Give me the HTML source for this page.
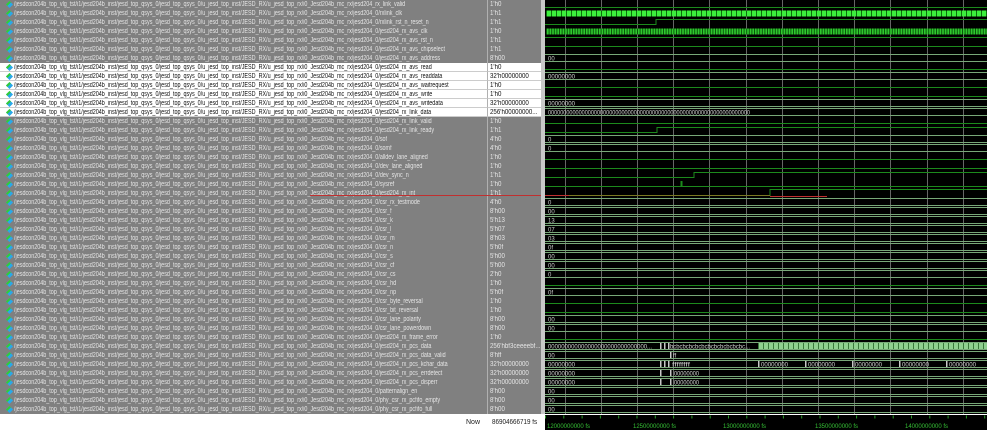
<!DOCTYPE html>
<html><head><meta charset="utf-8"><style>
*{margin:0;padding:0;box-sizing:border-box}
body{width:999px;height:446px;background:#fff;position:relative;overflow:hidden;font-family:"Liberation Sans",sans-serif}
#L{position:absolute;left:0;top:0;width:541px}
.r{height:9px;display:flex;font-size:7px;line-height:9px}
.n{width:488px;background:#808080;color:#e4e4e4;position:relative;overflow:hidden;white-space:nowrap;border-right:1px solid #b0b0b0}
.n span{position:absolute;left:14px;top:0;transform:scaleX(.775);transform-origin:0 0}
.n i{position:absolute;left:7px;top:2px;width:5px;height:5px;background:#2aa8e8;transform:rotate(45deg);border-left:2px solid #3c3}
.v{width:53px;background:#808080;color:#e4e4e4;padding-left:2px;white-space:nowrap;overflow:hidden;position:relative}
.v b{font-weight:normal;position:absolute;left:2px;transform:scaleX(.88);transform-origin:0 0}
.w .n,.w .v{background:#fff;color:#111;border-bottom:1px solid #ccc}
#sep{position:absolute;left:541px;top:0;width:4px;height:415px;background:#c8c8c8}
#red{position:absolute;left:310px;top:195px;width:231px;height:1px;background:#c03030}
#bot{position:absolute;left:0;top:414px;width:545px;height:17px;background:#fff;font-size:7px;color:#222}
</style></head><body>
<div id="L">
<div class="r"><div class="n"><i></i><span>/jesdcon204b_top_vlg_tst/i1/jesd204b_inst/jesd_top_qsys_0/jesd_top_qsys_0/u_jesd_top_inst/JESD_RX/u_jesd_top_rx/i0_Jesd204b_mc_rx/jesd204_rx_link_valid</span></div><div class="v"><b>1'h0</b></div></div>
<div class="r"><div class="n"><i></i><span>/jesdcon204b_top_vlg_tst/i1/jesd204b_inst/jesd_top_qsys_0/jesd_top_qsys_0/u_jesd_top_inst/JESD_RX/u_jesd_top_rx/i0_Jesd204b_mc_rx/jesd204_0/rxlink_clk</span></div><div class="v"><b>1'h1</b></div></div>
<div class="r"><div class="n"><i></i><span>/jesdcon204b_top_vlg_tst/i1/jesd204b_inst/jesd_top_qsys_0/jesd_top_qsys_0/u_jesd_top_inst/JESD_RX/u_jesd_top_rx/i0_Jesd204b_mc_rx/jesd204_0/rxlink_rst_n_reset_n</span></div><div class="v"><b>1'h1</b></div></div>
<div class="r"><div class="n"><i></i><span>/jesdcon204b_top_vlg_tst/i1/jesd204b_inst/jesd_top_qsys_0/jesd_top_qsys_0/u_jesd_top_inst/JESD_RX/u_jesd_top_rx/i0_Jesd204b_mc_rx/jesd204_0/jesd204_rx_avs_clk</span></div><div class="v"><b>1'h0</b></div></div>
<div class="r"><div class="n"><i></i><span>/jesdcon204b_top_vlg_tst/i1/jesd204b_inst/jesd_top_qsys_0/jesd_top_qsys_0/u_jesd_top_inst/JESD_RX/u_jesd_top_rx/i0_Jesd204b_mc_rx/jesd204_0/jesd204_rx_avs_rst_n</span></div><div class="v"><b>1'h1</b></div></div>
<div class="r"><div class="n"><i></i><span>/jesdcon204b_top_vlg_tst/i1/jesd204b_inst/jesd_top_qsys_0/jesd_top_qsys_0/u_jesd_top_inst/JESD_RX/u_jesd_top_rx/i0_Jesd204b_mc_rx/jesd204_0/jesd204_rx_avs_chipselect</span></div><div class="v"><b>1'h1</b></div></div>
<div class="r"><div class="n"><i></i><span>/jesdcon204b_top_vlg_tst/i1/jesd204b_inst/jesd_top_qsys_0/jesd_top_qsys_0/u_jesd_top_inst/JESD_RX/u_jesd_top_rx/i0_Jesd204b_mc_rx/jesd204_0/jesd204_rx_avs_address</span></div><div class="v"><b>8'h00</b></div></div>
<div class="r w"><div class="n"><i></i><span>/jesdcon204b_top_vlg_tst/i1/jesd204b_inst/jesd_top_qsys_0/jesd_top_qsys_0/u_jesd_top_inst/JESD_RX/u_jesd_top_rx/i0_Jesd204b_mc_rx/jesd204_0/jesd204_rx_avs_read</span></div><div class="v"><b>1'h0</b></div></div>
<div class="r w"><div class="n"><i></i><span>/jesdcon204b_top_vlg_tst/i1/jesd204b_inst/jesd_top_qsys_0/jesd_top_qsys_0/u_jesd_top_inst/JESD_RX/u_jesd_top_rx/i0_Jesd204b_mc_rx/jesd204_0/jesd204_rx_avs_readdata</span></div><div class="v"><b>32'h00000000</b></div></div>
<div class="r w"><div class="n"><i></i><span>/jesdcon204b_top_vlg_tst/i1/jesd204b_inst/jesd_top_qsys_0/jesd_top_qsys_0/u_jesd_top_inst/JESD_RX/u_jesd_top_rx/i0_Jesd204b_mc_rx/jesd204_0/jesd204_rx_avs_waitrequest</span></div><div class="v"><b>1'h0</b></div></div>
<div class="r w"><div class="n"><i></i><span>/jesdcon204b_top_vlg_tst/i1/jesd204b_inst/jesd_top_qsys_0/jesd_top_qsys_0/u_jesd_top_inst/JESD_RX/u_jesd_top_rx/i0_Jesd204b_mc_rx/jesd204_0/jesd204_rx_avs_write</span></div><div class="v"><b>1'h0</b></div></div>
<div class="r w"><div class="n"><i></i><span>/jesdcon204b_top_vlg_tst/i1/jesd204b_inst/jesd_top_qsys_0/jesd_top_qsys_0/u_jesd_top_inst/JESD_RX/u_jesd_top_rx/i0_Jesd204b_mc_rx/jesd204_0/jesd204_rx_avs_writedata</span></div><div class="v"><b>32'h00000000</b></div></div>
<div class="r w"><div class="n"><i></i><span>/jesdcon204b_top_vlg_tst/i1/jesd204b_inst/jesd_top_qsys_0/jesd_top_qsys_0/u_jesd_top_inst/JESD_RX/u_jesd_top_rx/i0_Jesd204b_mc_rx/jesd204_0/jesd204_rx_link_data</span></div><div class="v"><b>256'h00000000...</b></div></div>
<div class="r"><div class="n"><i></i><span>/jesdcon204b_top_vlg_tst/i1/jesd204b_inst/jesd_top_qsys_0/jesd_top_qsys_0/u_jesd_top_inst/JESD_RX/u_jesd_top_rx/i0_Jesd204b_mc_rx/jesd204_0/jesd204_rx_link_valid</span></div><div class="v"><b>1'h0</b></div></div>
<div class="r"><div class="n"><i></i><span>/jesdcon204b_top_vlg_tst/i1/jesd204b_inst/jesd_top_qsys_0/jesd_top_qsys_0/u_jesd_top_inst/JESD_RX/u_jesd_top_rx/i0_Jesd204b_mc_rx/jesd204_0/jesd204_rx_link_ready</span></div><div class="v"><b>1'h1</b></div></div>
<div class="r"><div class="n"><i></i><span>/jesdcon204b_top_vlg_tst/i1/jesd204b_inst/jesd_top_qsys_0/jesd_top_qsys_0/u_jesd_top_inst/JESD_RX/u_jesd_top_rx/i0_Jesd204b_mc_rx/jesd204_0/sof</span></div><div class="v"><b>4'h0</b></div></div>
<div class="r"><div class="n"><i></i><span>/jesdcon204b_top_vlg_tst/i1/jesd204b_inst/jesd_top_qsys_0/jesd_top_qsys_0/u_jesd_top_inst/JESD_RX/u_jesd_top_rx/i0_Jesd204b_mc_rx/jesd204_0/somf</span></div><div class="v"><b>4'h0</b></div></div>
<div class="r"><div class="n"><i></i><span>/jesdcon204b_top_vlg_tst/i1/jesd204b_inst/jesd_top_qsys_0/jesd_top_qsys_0/u_jesd_top_inst/JESD_RX/u_jesd_top_rx/i0_Jesd204b_mc_rx/jesd204_0/alldev_lane_aligned</span></div><div class="v"><b>1'h0</b></div></div>
<div class="r"><div class="n"><i></i><span>/jesdcon204b_top_vlg_tst/i1/jesd204b_inst/jesd_top_qsys_0/jesd_top_qsys_0/u_jesd_top_inst/JESD_RX/u_jesd_top_rx/i0_Jesd204b_mc_rx/jesd204_0/dev_lane_aligned</span></div><div class="v"><b>1'h0</b></div></div>
<div class="r"><div class="n"><i></i><span>/jesdcon204b_top_vlg_tst/i1/jesd204b_inst/jesd_top_qsys_0/jesd_top_qsys_0/u_jesd_top_inst/JESD_RX/u_jesd_top_rx/i0_Jesd204b_mc_rx/jesd204_0/dev_sync_n</span></div><div class="v"><b>1'h1</b></div></div>
<div class="r"><div class="n"><i></i><span>/jesdcon204b_top_vlg_tst/i1/jesd204b_inst/jesd_top_qsys_0/jesd_top_qsys_0/u_jesd_top_inst/JESD_RX/u_jesd_top_rx/i0_Jesd204b_mc_rx/jesd204_0/sysref</span></div><div class="v"><b>1'h0</b></div></div>
<div class="r"><div class="n"><i></i><span>/jesdcon204b_top_vlg_tst/i1/jesd204b_inst/jesd_top_qsys_0/jesd_top_qsys_0/u_jesd_top_inst/JESD_RX/u_jesd_top_rx/i0_Jesd204b_mc_rx/jesd204_0/jesd204_rx_int</span></div><div class="v"><b>1'h1</b></div></div>
<div class="r"><div class="n"><i></i><span>/jesdcon204b_top_vlg_tst/i1/jesd204b_inst/jesd_top_qsys_0/jesd_top_qsys_0/u_jesd_top_inst/JESD_RX/u_jesd_top_rx/i0_Jesd204b_mc_rx/jesd204_0/csr_rx_testmode</span></div><div class="v"><b>4'h0</b></div></div>
<div class="r"><div class="n"><i></i><span>/jesdcon204b_top_vlg_tst/i1/jesd204b_inst/jesd_top_qsys_0/jesd_top_qsys_0/u_jesd_top_inst/JESD_RX/u_jesd_top_rx/i0_Jesd204b_mc_rx/jesd204_0/csr_f</span></div><div class="v"><b>8'h00</b></div></div>
<div class="r"><div class="n"><i></i><span>/jesdcon204b_top_vlg_tst/i1/jesd204b_inst/jesd_top_qsys_0/jesd_top_qsys_0/u_jesd_top_inst/JESD_RX/u_jesd_top_rx/i0_Jesd204b_mc_rx/jesd204_0/csr_k</span></div><div class="v"><b>5'h13</b></div></div>
<div class="r"><div class="n"><i></i><span>/jesdcon204b_top_vlg_tst/i1/jesd204b_inst/jesd_top_qsys_0/jesd_top_qsys_0/u_jesd_top_inst/JESD_RX/u_jesd_top_rx/i0_Jesd204b_mc_rx/jesd204_0/csr_l</span></div><div class="v"><b>5'h07</b></div></div>
<div class="r"><div class="n"><i></i><span>/jesdcon204b_top_vlg_tst/i1/jesd204b_inst/jesd_top_qsys_0/jesd_top_qsys_0/u_jesd_top_inst/JESD_RX/u_jesd_top_rx/i0_Jesd204b_mc_rx/jesd204_0/csr_m</span></div><div class="v"><b>8'h03</b></div></div>
<div class="r"><div class="n"><i></i><span>/jesdcon204b_top_vlg_tst/i1/jesd204b_inst/jesd_top_qsys_0/jesd_top_qsys_0/u_jesd_top_inst/JESD_RX/u_jesd_top_rx/i0_Jesd204b_mc_rx/jesd204_0/csr_n</span></div><div class="v"><b>5'h0f</b></div></div>
<div class="r"><div class="n"><i></i><span>/jesdcon204b_top_vlg_tst/i1/jesd204b_inst/jesd_top_qsys_0/jesd_top_qsys_0/u_jesd_top_inst/JESD_RX/u_jesd_top_rx/i0_Jesd204b_mc_rx/jesd204_0/csr_s</span></div><div class="v"><b>5'h00</b></div></div>
<div class="r"><div class="n"><i></i><span>/jesdcon204b_top_vlg_tst/i1/jesd204b_inst/jesd_top_qsys_0/jesd_top_qsys_0/u_jesd_top_inst/JESD_RX/u_jesd_top_rx/i0_Jesd204b_mc_rx/jesd204_0/csr_cf</span></div><div class="v"><b>5'h00</b></div></div>
<div class="r"><div class="n"><i></i><span>/jesdcon204b_top_vlg_tst/i1/jesd204b_inst/jesd_top_qsys_0/jesd_top_qsys_0/u_jesd_top_inst/JESD_RX/u_jesd_top_rx/i0_Jesd204b_mc_rx/jesd204_0/csr_cs</span></div><div class="v"><b>2'h0</b></div></div>
<div class="r"><div class="n"><i></i><span>/jesdcon204b_top_vlg_tst/i1/jesd204b_inst/jesd_top_qsys_0/jesd_top_qsys_0/u_jesd_top_inst/JESD_RX/u_jesd_top_rx/i0_Jesd204b_mc_rx/jesd204_0/csr_hd</span></div><div class="v"><b>1'h0</b></div></div>
<div class="r"><div class="n"><i></i><span>/jesdcon204b_top_vlg_tst/i1/jesd204b_inst/jesd_top_qsys_0/jesd_top_qsys_0/u_jesd_top_inst/JESD_RX/u_jesd_top_rx/i0_Jesd204b_mc_rx/jesd204_0/csr_np</span></div><div class="v"><b>5'h0f</b></div></div>
<div class="r"><div class="n"><i></i><span>/jesdcon204b_top_vlg_tst/i1/jesd204b_inst/jesd_top_qsys_0/jesd_top_qsys_0/u_jesd_top_inst/JESD_RX/u_jesd_top_rx/i0_Jesd204b_mc_rx/jesd204_0/csr_byte_reversal</span></div><div class="v"><b>1'h0</b></div></div>
<div class="r"><div class="n"><i></i><span>/jesdcon204b_top_vlg_tst/i1/jesd204b_inst/jesd_top_qsys_0/jesd_top_qsys_0/u_jesd_top_inst/JESD_RX/u_jesd_top_rx/i0_Jesd204b_mc_rx/jesd204_0/csr_bit_reversal</span></div><div class="v"><b>1'h0</b></div></div>
<div class="r"><div class="n"><i></i><span>/jesdcon204b_top_vlg_tst/i1/jesd204b_inst/jesd_top_qsys_0/jesd_top_qsys_0/u_jesd_top_inst/JESD_RX/u_jesd_top_rx/i0_Jesd204b_mc_rx/jesd204_0/csr_lane_polarity</span></div><div class="v"><b>8'h00</b></div></div>
<div class="r"><div class="n"><i></i><span>/jesdcon204b_top_vlg_tst/i1/jesd204b_inst/jesd_top_qsys_0/jesd_top_qsys_0/u_jesd_top_inst/JESD_RX/u_jesd_top_rx/i0_Jesd204b_mc_rx/jesd204_0/csr_lane_powerdown</span></div><div class="v"><b>8'h00</b></div></div>
<div class="r"><div class="n"><i></i><span>/jesdcon204b_top_vlg_tst/i1/jesd204b_inst/jesd_top_qsys_0/jesd_top_qsys_0/u_jesd_top_inst/JESD_RX/u_jesd_top_rx/i0_Jesd204b_mc_rx/jesd204_0/jesd204_rx_frame_error</span></div><div class="v"><b>1'h0</b></div></div>
<div class="r"><div class="n"><i></i><span>/jesdcon204b_top_vlg_tst/i1/jesd204b_inst/jesd_top_qsys_0/jesd_top_qsys_0/u_jesd_top_inst/JESD_RX/u_jesd_top_rx/i0_Jesd204b_mc_rx/jesd204_0/jesd204_rx_pcs_data</span></div><div class="v"><b>256'hbf3ceeeebf...</b></div></div>
<div class="r"><div class="n"><i></i><span>/jesdcon204b_top_vlg_tst/i1/jesd204b_inst/jesd_top_qsys_0/jesd_top_qsys_0/u_jesd_top_inst/JESD_RX/u_jesd_top_rx/i0_Jesd204b_mc_rx/jesd204_0/jesd204_rx_pcs_data_valid</span></div><div class="v"><b>8'hff</b></div></div>
<div class="r"><div class="n"><i></i><span>/jesdcon204b_top_vlg_tst/i1/jesd204b_inst/jesd_top_qsys_0/jesd_top_qsys_0/u_jesd_top_inst/JESD_RX/u_jesd_top_rx/i0_Jesd204b_mc_rx/jesd204_0/jesd204_rx_pcs_kchar_data</span></div><div class="v"><b>32'h00000000</b></div></div>
<div class="r"><div class="n"><i></i><span>/jesdcon204b_top_vlg_tst/i1/jesd204b_inst/jesd_top_qsys_0/jesd_top_qsys_0/u_jesd_top_inst/JESD_RX/u_jesd_top_rx/i0_Jesd204b_mc_rx/jesd204_0/jesd204_rx_pcs_errdetect</span></div><div class="v"><b>32'h00000000</b></div></div>
<div class="r"><div class="n"><i></i><span>/jesdcon204b_top_vlg_tst/i1/jesd204b_inst/jesd_top_qsys_0/jesd_top_qsys_0/u_jesd_top_inst/JESD_RX/u_jesd_top_rx/i0_Jesd204b_mc_rx/jesd204_0/jesd204_rx_pcs_disperr</span></div><div class="v"><b>32'h00000000</b></div></div>
<div class="r"><div class="n"><i></i><span>/jesdcon204b_top_vlg_tst/i1/jesd204b_inst/jesd_top_qsys_0/jesd_top_qsys_0/u_jesd_top_inst/JESD_RX/u_jesd_top_rx/i0_Jesd204b_mc_rx/jesd204_0/patternalign_en</span></div><div class="v"><b>8'h00</b></div></div>
<div class="r"><div class="n"><i></i><span>/jesdcon204b_top_vlg_tst/i1/jesd204b_inst/jesd_top_qsys_0/jesd_top_qsys_0/u_jesd_top_inst/JESD_RX/u_jesd_top_rx/i0_Jesd204b_mc_rx/jesd204_0/phy_csr_rx_pcfifo_empty</span></div><div class="v"><b>8'h00</b></div></div>
<div class="r"><div class="n"><i></i><span>/jesdcon204b_top_vlg_tst/i1/jesd204b_inst/jesd_top_qsys_0/jesd_top_qsys_0/u_jesd_top_inst/JESD_RX/u_jesd_top_rx/i0_Jesd204b_mc_rx/jesd204_0/phy_csr_rx_pcfifo_full</span></div><div class="v"><b>8'h00</b></div></div>
</div>
<div id="sep"></div>
<div id="red"></div>
<div id="bot"><span style="position:absolute;left:466px;top:5px">Now</span><span style="position:absolute;left:492px;top:5px;transform:scaleX(.9);transform-origin:0 0">86904666719 fs</span></div>
<svg style="position:absolute;left:0;top:0" width="999" height="446" viewBox="0 0 999 446" font-family="Liberation Sans, sans-serif">
<rect x="545" y="0" width="442" height="414" fill="#000"/>
<g stroke="#666" stroke-width="1">
<path d="M565.5 0V414M601.5 0V414M637.5 0V414M673.5 0V414M709.5 0V414M746.5 0V414M782.5 0V414M818.5 0V414M854.5 0V414M890.5 0V414M927.5 0V414M963.5 0V414"/>
</g>
<g stroke="#1c8a1c" stroke-width="1" fill="none">
<path d="M545 7.5H987"/>
<path d="M545 24.5H656V19.5H987"/>
<path d="M545 37.5H987"/>
<path d="M545 46.5H987"/>
<path d="M545 69.5H987"/><path d="M545 87.5H987"/><path d="M545 96.5H987"/>
<path d="M545 123.5H987"/>
<path d="M545 132.5H657V127.5H987"/>
<path d="M545 159.5H987"/><path d="M545 168.5H987"/>
<path d="M545 177.5H694V172.5H987"/>
<path d="M545 186.5H681V181.5H682V186.5H987"/>
<path d="M545 195.5H770V189.5H987"/>
<path d="M545 285.5H987"/><path d="M545 303.5H987"/><path d="M545 312.5H987"/>
<path d="M545 339.5H987"/>
</g>
<line x1="545" y1="195.5" x2="569" y2="195.5" stroke="#c03030"/>
<line x1="569" y1="195.5" x2="770" y2="195.5" stroke="#7a7a22"/>
<line x1="770" y1="196.5" x2="827" y2="196.5" stroke="#c03030"/>
<rect x="546" y="10.5" width="441" height="6" fill="#3cf03c"/>
<line x1="546" y1="13.5" x2="987" y2="13.5" stroke="#0c700c" stroke-width="6" stroke-dasharray="1 4"/>
<rect x="546" y="28.5" width="441" height="6" fill="#2fc82f"/>
<line x1="546" y1="31.5" x2="987" y2="31.5" stroke="#0a5a0a" stroke-width="6" stroke-dasharray="1 1.6"/>
<g stroke="#78a878" stroke-width="1" fill="none">
<path d="M545 54.5H987M545 61.5H987"/>
<path d="M545 72.5H987M545 79.5H987"/>
<path d="M545 99.5H987M545 106.5H987"/>
<path d="M545 108.5H987M545 115.5H987"/>
<path d="M545 135.5H987M545 142.5H987M545 144.5H987M545 151.5H987"/>
<path d="M545 198.5H987M545 205.5H987M545 207.5H987M545 214.5H987M545 216.5H987M545 223.5H987M545 225.5H987M545 232.5H987M545 234.5H987M545 241.5H987M545 243.5H987M545 250.5H987M545 252.5H987M545 259.5H987M545 261.5H987M545 268.5H987M545 270.5H987M545 277.5H987"/>
<path d="M545 288.5H987M545 295.5H987"/>
<path d="M545 315.5H987M545 322.5H987M545 324.5H987M545 331.5H987"/>
<path d="M545 342.5H987M545 349.5H987M545 351.5H987M545 358.5H987M545 360.5H987M545 367.5H987M545 369.5H987M545 376.5H987M545 378.5H987M545 385.5H987M545 387.5H987M545 394.5H987M545 396.5H987M545 403.5H987M545 405.5H987M545 412.5H987"/>
</g>
<g fill="#d0d0d0" font-size="6">
<text x="548" y="60.5">00</text>
<text x="548" y="78.5" textLength="27" lengthAdjust="spacingAndGlyphs">00000000</text>
<text x="548" y="105.5" textLength="27" lengthAdjust="spacingAndGlyphs">00000000</text>
<text x="548" y="114.5" textLength="202" lengthAdjust="spacingAndGlyphs">000000000000000000000000000000000000000000000000000000000000000000</text>
<text x="548" y="141.5">0</text><text x="548" y="150.5">0</text>
<text x="548" y="204.5">0</text><text x="548" y="213.5">00</text><text x="548" y="222.5">13</text><text x="548" y="231.5">07</text><text x="548" y="240.5">03</text><text x="548" y="249.5">0f</text><text x="548" y="258.5">00</text><text x="548" y="267.5">00</text><text x="548" y="276.5">0</text>
<text x="548" y="294.5">0f</text>
<text x="548" y="321.5">00</text><text x="548" y="330.5">00</text>
<text x="548" y="348.5" textLength="104" lengthAdjust="spacingAndGlyphs">000000000000000000000000000000...</text>
<text x="670" y="348.5" textLength="80" lengthAdjust="spacingAndGlyphs">bcbcbcbcbcbcbcbcbcbcbcbc...</text>
<text x="548" y="357.5">00</text><text x="673" y="357.5">ff</text>
<text x="548" y="366.5" textLength="27" lengthAdjust="spacingAndGlyphs">00000000</text>
<text x="672" y="366.5" textLength="18" lengthAdjust="spacingAndGlyphs">ffffffff</text>
<text x="761" y="366.5" textLength="27" lengthAdjust="spacingAndGlyphs">00000000</text>
<text x="808" y="366.5" textLength="27" lengthAdjust="spacingAndGlyphs">00000000</text>
<text x="855" y="366.5" textLength="27" lengthAdjust="spacingAndGlyphs">00000000</text>
<text x="902" y="366.5" textLength="27" lengthAdjust="spacingAndGlyphs">00000000</text>
<text x="949" y="366.5" textLength="27" lengthAdjust="spacingAndGlyphs">00000000</text>
<text x="548" y="375.5" textLength="27" lengthAdjust="spacingAndGlyphs">00000000</text>
<text x="674" y="375.5" textLength="25" lengthAdjust="spacingAndGlyphs">00000000</text>
<text x="548" y="384.5" textLength="27" lengthAdjust="spacingAndGlyphs">00000000</text>
<text x="674" y="384.5" textLength="25" lengthAdjust="spacingAndGlyphs">00000000</text>
<text x="548" y="393.5">00</text><text x="548" y="402.5">00</text><text x="548" y="411.5">00</text>
</g>
<g fill="#c8c8c8">
<rect x="660" y="343" width="1.5" height="6"/><rect x="664" y="343" width="1.5" height="6"/><rect x="668" y="343" width="1.5" height="6"/>
<rect x="670" y="352" width="1.5" height="6"/>
<rect x="660" y="361" width="1.5" height="6"/><rect x="664" y="361" width="1.5" height="6"/><rect x="668" y="361" width="1.5" height="6"/>
<rect x="758" y="361" width="1.5" height="6"/><rect x="805" y="361" width="1.5" height="6"/><rect x="852" y="361" width="1.5" height="6"/><rect x="899" y="361" width="1.5" height="6"/><rect x="946" y="361" width="1.5" height="6"/>
<rect x="660" y="370" width="1.5" height="6"/><rect x="670" y="370" width="1.5" height="6"/>
<rect x="660" y="379" width="1.5" height="6"/><rect x="670" y="379" width="1.5" height="6"/>
</g>
<rect x="758" y="343" width="229" height="6" fill="#8fd08f"/>
<line x1="758" y1="346" x2="987" y2="346" stroke="#3a7a3a" stroke-width="6" stroke-dasharray="1 4"/>
<rect x="545" y="415" width="442" height="15" fill="#000"/>
<line x1="545" y1="417" x2="987" y2="417" stroke="#2a9a2a" stroke-width="3" stroke-dasharray="1 17.3"/>
<g fill="#35c035" font-size="6">
<text x="547" y="428">12000000000 fs</text>
<text x="633" y="428">12500000000 fs</text>
<text x="723" y="428">13000000000 fs</text>
<text x="815" y="428">13500000000 fs</text>
<text x="905" y="428">14000000000 fs</text>
</g>
</svg>
</body></html>
